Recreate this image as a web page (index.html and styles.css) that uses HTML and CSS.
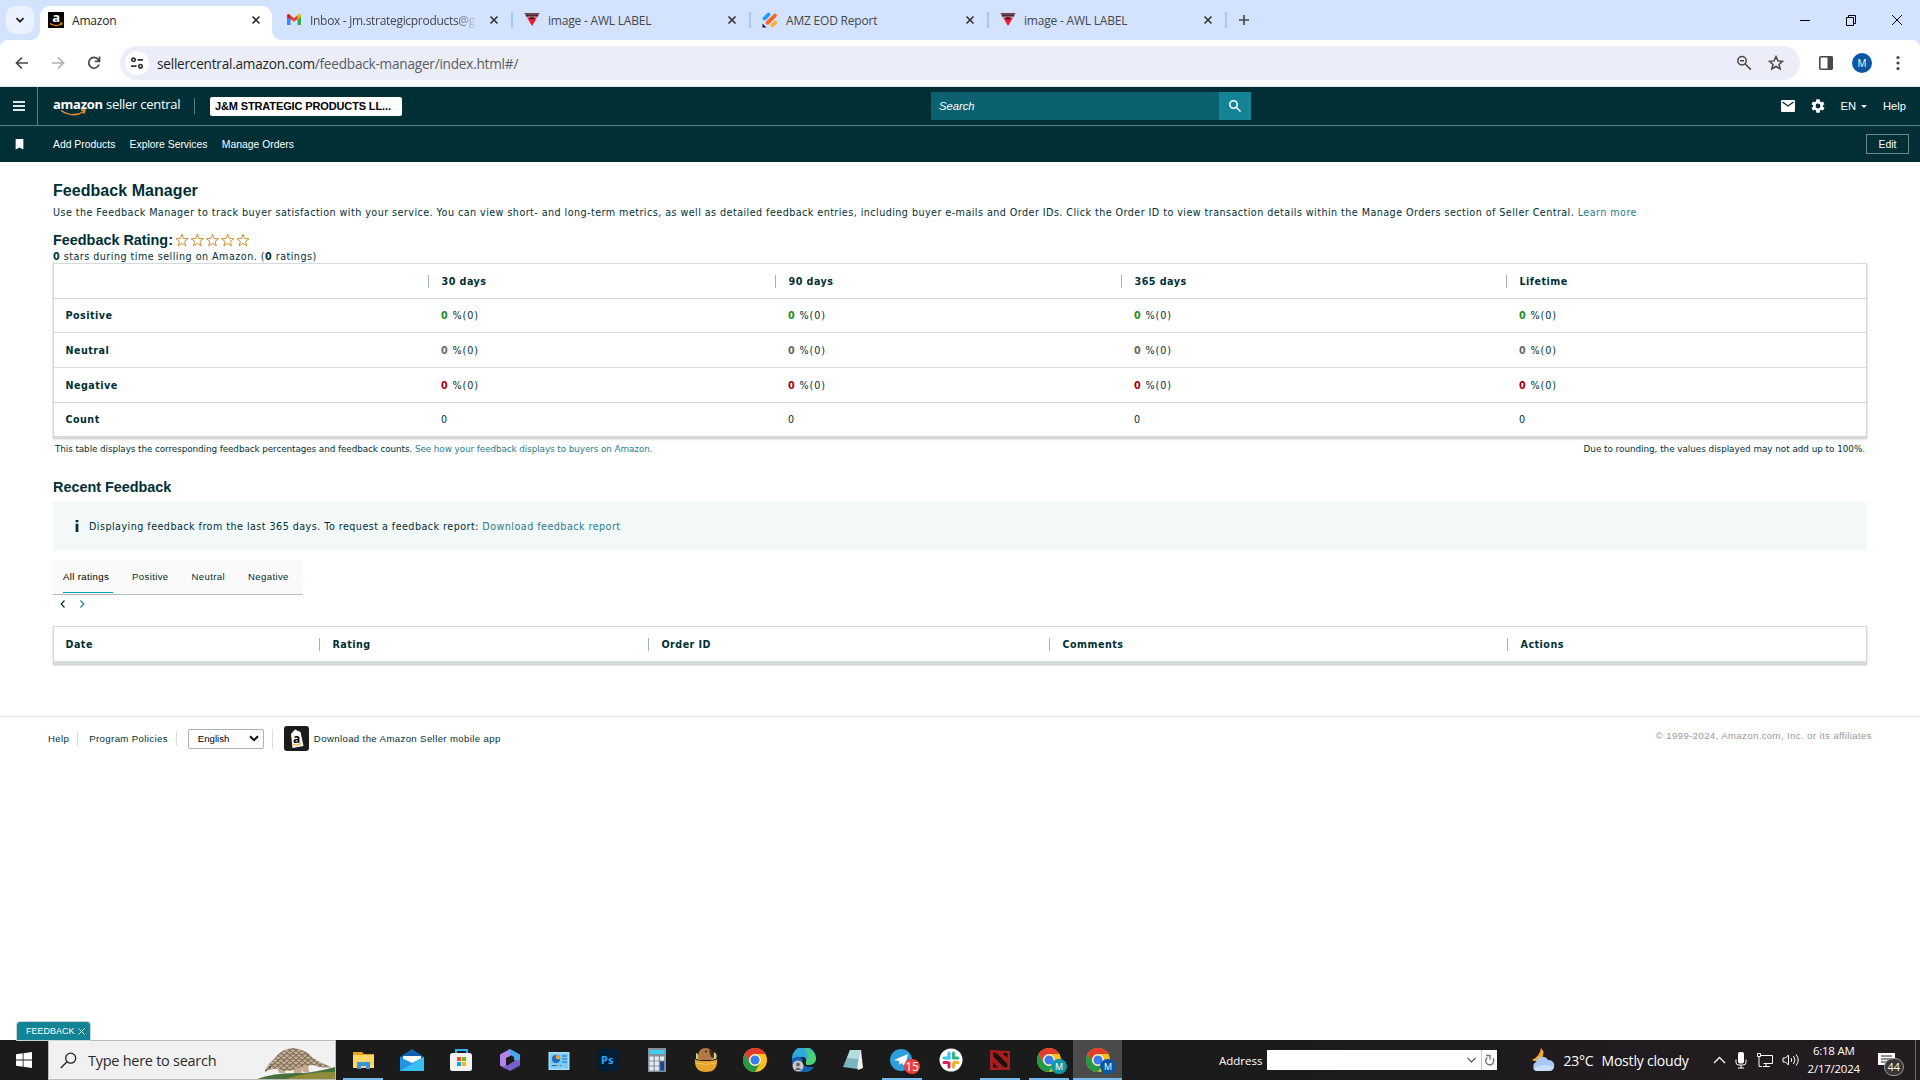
FILE: index.html
```html
<!DOCTYPE html>
<html lang="en">
<head>
    <meta charset="UTF-8">
    <meta name="viewport" content="width=device-width, initial-scale=1.0">
    <title>Amazon</title>
    <link rel="stylesheet" href="styles.css">
</head>
<body>
    <svg class="defs" width="0" height="0">
        <symbol id="x" viewBox="0 0 10 10"><path d="M1.500 1.500l7 7m0-7l-7 7"/></symbol>
        <symbol id="awl" viewBox="0 0 16 16"><path d="M.5 1h15l-2 4h-11z" fill="#2a1a3a"/><path d="M1 2h14M3 4.300h10" stroke="#d98a6a" stroke-width=".8"/><path d="M3 5.500h10L8 14z" fill="#f5142b"/><path d="M5.800 6.200h4.400" stroke="#14143c" stroke-width="1.800"/></symbol>
        <symbol id="chrome" viewBox="0 0 24 24"><circle cx="12" cy="12" r="12" fill="#fbc11a"/><path d="M1.600 6A12 12 0 0 1 22.400 6H12a6 6 0 0 0-5.200 9z" fill="#e33b2e"/><path d="M1.600 6A12 12 0 0 0 12 24l5.200-9A6 6 0 0 1 6.800 15z" fill="#229a48"/><circle cx="12" cy="12" r="5.800" fill="#fff"/><circle cx="12" cy="12" r="4.600" fill="#3b7ded"/></symbol>
    </svg>

    <div class="tabstrip">
        <div class="tab-search"><svg width="12" height="12" viewBox="0 0 12 12"><path d="M2.500 4.200 6 7.700l3.500-3.500" fill="none" stroke="#1f1f1f" stroke-width="1.800"/></svg></div>
        <div class="tab active">
            <span class="fav amazon">a<svg viewBox="0 0 16 6"><path d="M2 1.500q6 3.800 11 .6M12 1.200l2-.2-.5 2" fill="none" stroke="#f90" stroke-width="1.100"/></svg></span>
            <span class="tab-title">Amazon</span>
            <svg class="close"><use href="#x"/></svg>
        </div>
        <div class="tab">
            <svg class="fav" viewBox="0 0 16 16"><path d="M1 13V4l3.500 2.600V13z" fill="#4285f4"/><path d="M15 13V4l-3.500 2.600V13z" fill="#34a853"/><path d="M1 4.500V3.300q1-1.600 2.600-.6L8 6l4.400-3.300q1.600-1 2.600.6v1.200L8 9.800z" fill="#ea4335"/><path d="M11.500 3.400l1-.7q1.600-1 2.500.6v1.500l-3.500 2.500z" fill="#fbbc04"/><path d="M1 3.300q.6-1.400 2.300-.8l1.200.9v3.800L1 4.700z" fill="#c5221f"/></svg>
            <span class="tab-title fade">Inbox - jm.strategicproducts@g</span>
            <svg class="close"><use href="#x"/></svg>
        </div>
        <div class="tab">
            <svg class="fav"><use href="#awl"/></svg>
            <span class="tab-title">image - AWL LABEL</span>
            <svg class="close"><use href="#x"/></svg>
        </div>
        <div class="tab">
            <svg class="fav" viewBox="0 0 16 16"><g stroke-width="3.800" stroke-linecap="round"><path d="M2.500 6.500l4-4" stroke="#1e9bff"/><path d="M5.500 10.800L13 3.500" stroke="#ff6120"/><path d="M10.300 13.500l3-3" stroke="#ffb32c"/></g><path d="M.5 11.500l4 4h-4z" fill="#0a1551"/></svg>
            <span class="tab-title">AMZ EOD Report</span>
            <svg class="close"><use href="#x"/></svg>
        </div>
        <div class="tab">
            <svg class="fav"><use href="#awl"/></svg>
            <span class="tab-title">image - AWL LABEL</span>
            <svg class="close"><use href="#x"/></svg>
        </div>
        <svg class="new-tab" viewBox="0 0 12 12"><path d="M6 1v10M1 6h10" stroke="#45474a" stroke-width="1.600"/></svg>
        <div class="win-buttons">
            <svg viewBox="0 0 12 12"><path d="M1 6.500h10"/></svg>
            <svg viewBox="0 0 12 12"><path d="M1.500 3.500h7v8h-7zM3.500 3.500v-2h7v8h-2"/></svg>
            <svg viewBox="0 0 12 12"><path d="M1 1l10 10M11 1L1 11"/></svg>
        </div>
    </div>

    <div class="toolbar">
        <svg class="nav-icon" viewBox="0 0 16 16"><path d="M14 8H3M8 2.500L2.500 8 8 13.500"/></svg>
        <svg class="nav-icon off" viewBox="0 0 16 16"><path d="M2 8h11M8 2.500L13.500 8 8 13.500"/></svg>
        <svg class="nav-icon" viewBox="0 0 16 16"><path d="M13 9.500A5.300 5.300 0 1 1 12 4.300l1 1.400M13.500 1.500v4.800H8.800"/></svg>
        <div class="omnibox">
            <div class="site-info"><svg width="14" height="14" viewBox="0 0 14 14" fill="none" stroke="#333" stroke-width="1.700"><circle cx="3.500" cy="3.800" r="1.700"/><path d="M7.500 3.800H13M1 10.200h5.500"/><circle cx="10.500" cy="10.200" r="1.700"/></svg></div>
            <span class="url"><span class="host">sellercentral.amazon.com</span>/feedback-manager/index.html#/</span>
            <svg class="omni-icon" viewBox="0 0 16 16"><circle cx="6" cy="5.800" r="4.200"/><path d="M9.200 9l5.600 5.600M4 5.800h4"/></svg>
            <svg class="omni-icon" viewBox="0 0 16 16"><path d="M8 1.600l1.900 4.300 4.700.4-3.600 3.100 1.100 4.600L8 11.500 3.900 14 5 9.400 1.400 6.300l4.700-.4z"/></svg>
        </div>
        <svg class="panel" viewBox="0 0 16 16"><rect x="1.800" y="1.800" width="12.400" height="12.400" rx="1" fill="none" stroke="#474747" stroke-width="1.600"/><path d="M9.500 1.500h5v13h-5z" fill="#474747"/></svg>
        <span class="avatar">M</span>
        <svg class="dots" viewBox="0 0 4 16" fill="#474747"><circle cx="2" cy="2.500" r="1.600"/><circle cx="2" cy="8" r="1.600"/><circle cx="2" cy="13.500" r="1.600"/></svg>
    </div>

    <header>
        <div class="topbar">
            <div class="menu"><i></i><i></i><i></i></div>
            <div class="logo">
                <span><b>amazon</b> seller central</span>
                <svg viewBox="0 0 27 8"><path d="M1 1.500q12 8 23 1M21 1.300l4-.2-1 3.600" fill="none" stroke="#f3902c" stroke-width="1.400"/></svg>
            </div>
            <div class="store"><span>J&amp;M STRATEGIC PRODUCTS LL...</span></div>
            <div class="search">
                <div class="search-field">Search</div>
                <div class="search-btn"><svg width="14" height="14" viewBox="0 0 14 14" fill="none" stroke="#fff" stroke-width="1.600"><circle cx="5.500" cy="5.500" r="3.700"/><path d="M8.200 8.200l4.300 4.300"/></svg></div>
            </div>
            <div class="top-links">
                <svg width="14" height="12" viewBox="0 0 14 12"><rect width="14" height="12" rx="1.300" fill="#fff"/><path d="M1.500 2L7 6l5.500-4" fill="none" stroke="#002e36" stroke-width="1.300"/></svg>
                <svg class="gear" viewBox="0 0 24 24"><path fill="#fff" d="M19.400 13a7.500 7.500 0 0 0 0-2l2.400-1.800-2.300-4-2.800 1.200a7.500 7.500 0 0 0-1.700-1L14.500 2h-5L9 5.400a7.500 7.500 0 0 0-1.700 1L4.500 5.200l-2.300 4L4.600 11a7.500 7.500 0 0 0 0 2l-2.400 1.800 2.300 4 2.800-1.200a7.500 7.500 0 0 0 1.700 1l.5 3.400h5l.5-3.400a7.500 7.500 0 0 0 1.700-1l2.800 1.200 2.300-4zM12 15.600a3.600 3.600 0 1 1 0-7.200 3.600 3.600 0 0 1 0 7.200z"/></svg>
                <span class="lang">EN</span><i class="caret"></i>
                <span class="help">Help</span>
            </div>
        </div>
        <div class="bookmarks">
            <svg class="bookmark" viewBox="0 0 8 10"><path d="M.5 0h7v9.500L4 7.800.5 9.500z" fill="#fff"/></svg>
            <nav><a>Add Products</a><a>Explore Services</a><a>Manage Orders</a></nav>
            <button class="edit">Edit</button>
        </div>
    </header>

    <main>
        <h1>Feedback Manager</h1>
        <p class="intro">Use the Feedback Manager to track buyer satisfaction with your service. You can view short- and long-term metrics, as well as detailed feedback entries, including buyer e-mails and Order IDs. Click the Order ID to view transaction details within the Manage Orders section of Seller Central. <a>Learn more</a></p>
        <div class="rating">
            <h2>Feedback Rating:</h2>
            <svg class="stars" viewBox="0 0 76 15" fill="none" stroke="#cf8f35" stroke-width="1"><path id="s" d="M7 1.200l1.600 4.300 4.500.2-3.500 2.800 1.200 4.400L7 10.400l-3.800 2.500 1.200-4.400L.9 5.700l4.500-.2z"/><use href="#s" x="15.300"/><use href="#s" x="30.500"/><use href="#s" x="45.700"/><use href="#s" x="61"/></svg>
        </div>
        <p class="stars-note"><b>0</b> stars during time selling on Amazon. (<b>0</b> ratings)</p>

        <table class="metrics">
            <tr><th class="c0"></th><th class="c1 sep">30 days</th><th class="c2 sep">90 days</th><th class="c3 sep">365 days</th><th class="sep">Lifetime</th></tr>
            <tr class="positive"><th>Positive</th><td><b>0</b> %(0)</td><td><b>0</b> %(0)</td><td><b>0</b> %(0)</td><td><b>0</b> %(0)</td></tr>
            <tr class="neutral"><th>Neutral</th><td><b>0</b> %(0)</td><td><b>0</b> %(0)</td><td><b>0</b> %(0)</td><td><b>0</b> %(0)</td></tr>
            <tr class="negative"><th>Negative</th><td><b>0</b> %(0)</td><td><b>0</b> %(0)</td><td><b>0</b> %(0)</td><td><b>0</b> %(0)</td></tr>
            <tr class="total"><th>Count</th><td>0</td><td>0</td><td>0</td><td>0</td></tr>
        </table>
        <div class="notes">
            <span>This table displays the corresponding feedback percentages and feedback counts. <a>See how your feedback displays to buyers on Amazon.</a></span>
            <span class="rounding">Due to rounding, the values displayed may not add up to 100%.</span>
        </div>

        <h2 class="recent">Recent Feedback</h2>
        <div class="info">
            <svg viewBox="0 0 4 13"><path d="M.5 0h3v2.500h-3zM.5 4h3v9h-3z" fill="#002f36"/></svg>
            <span>Displaying feedback from the last 365 days. To request a feedback report: <a>Download feedback report</a></span>
        </div>
        <div class="filters"><span class="on">All ratings</span><span>Positive</span><span>Neutral</span><span>Negative</span></div>
        <div class="pager">
            <svg viewBox="0 0 6 8"><path d="M4.500.5L1.200 4l3.300 3.500" stroke="#002f36"/></svg>
            <svg viewBox="0 0 6 8"><path d="M1.500.5L4.800 4 1.500 7.500" stroke="#2b7d8e"/></svg>
        </div>
        <table class="entries">
            <tr><th class="e0">Date</th><th class="e1 sep">Rating</th><th class="e2 sep">Order ID</th><th class="e3 sep">Comments</th><th class="sep">Actions</th></tr>
        </table>
    </main>

    <footer>
        <span class="f-help">Help</span>
        <span class="f-policy">Program Policies</span>
        <div class="f-lang"><div class="select"><span>English</span><svg width="10" height="7" viewBox="0 0 10 7"><path d="M1 1.200l4 4 4-4" fill="none" stroke="#111" stroke-width="2"/></svg></div></div>
        <svg class="app-icon" viewBox="0 0 25 25"><rect width="25" height="25" rx="3" fill="#1b1b1b"/><path d="M7 8L11 3.500l5.500 2.500 3 14-11 2z" fill="#fff"/><text x="9" y="16.500" class="app-a">a</text><path d="M9 18.500q4 2 8-1" fill="none" stroke="#f90" stroke-width="1"/></svg>
        <span class="f-app">Download the Amazon Seller mobile app</span>
        <span class="copyright">© 1999-2024, Amazon.com, Inc. or its affiliates</span>
    </footer>

    <div class="feedback-tab"><span>FEEDBACK</span><svg width="7" height="7" viewBox="0 0 7 7"><path d="M.5.5l6 6m0-6l-6 6" stroke="#fff" stroke-width=".9"/></svg></div>

    <div class="taskbar">
        <div class="start"><svg width="16" height="16" viewBox="0 0 16 16" fill="#fff"><path d="M0 2.200l6.700-.9v6.300H0zM7.500 1.200L16 0v7.600H7.500zM0 8.400h6.700v6.300L0 13.800zM7.500 8.400H16V16l-8.500-1.200z"/></svg></div>
        <div class="task-search">
            <svg width="17" height="17" viewBox="0 0 17 17" fill="none" stroke="#222" stroke-width="1.300"><circle cx="10.700" cy="6.200" r="5"/><path d="M7 9.800L.8 16"/></svg>
            <span>Type here to search</span>
            <svg class="pangolin" width="78" height="32" viewBox="0 0 78 32">
                <defs><pattern id="scales" width="6" height="5" patternUnits="userSpaceOnUse"><rect width="6" height="5" fill="#a58f77"/><path d="M0 0q3 6 6 0M-3 3q3 5 6 0M3 3q3 5 6 0" stroke="#62503e" fill="#c2ad95" stroke-width=".7"/></pattern></defs>
                <path d="M0 32Q18 25 46 26Q60 25 78 20V32z" fill="#47703b"/><path d="M28 32q24-8 50-7v7z" fill="#8f8c3c"/>
                <path d="M20 20l2 6h6v-6zM36 19l1 7h8v-8zM44 18l2 7h6l-1-8z" fill="#c9ad93"/>
                <path d="M8 23Q11 17 17 12Q25 1 37 1Q50 3 56 11Q65 17 74 20Q65 22 56 18Q48 19 44 20Q30 27 21 22Q14 21 8 25z" fill="url(#scales)"/>
                <circle cx="13" cy="20" r=".8" fill="#222"/>
            </svg>
        </div>
        <div class="apps">
            <div class="app run"><svg viewBox="0 0 24 24"><path d="M2 4h9l2 2h10v4H2z" fill="#e0a416"/><path d="M2 7h21v13H2z" fill="#ffd667"/><path d="M6 21v-7h13v7h-4v-3h-5v3z" fill="#3a94dd"/></svg></div>
            <div class="app"><svg viewBox="0 0 24 24"><path d="M0 9l12-8 12 8v6H0z" fill="#1261b5"/><path d="M3 8h18v8H3z" fill="#fff"/><path d="M0 9l12 6 12-6v14H0z" fill="#2295e6"/><path d="M0 23L24 9v14z" fill="#38c0f3"/></svg></div>
            <div class="app"><svg viewBox="0 0 24 24"><path d="M7 6V2h11v4" fill="none" stroke="#2bb4ee" stroke-width="2"/><rect x="1" y="5" width="22" height="18" rx="2.500" fill="#f3f3f3"/><path d="M8 9h4v4H8z" fill="#f25022"/><path d="M13 9h4v4h-4z" fill="#7fba00"/><path d="M8 14h4v4H8z" fill="#00a4ef"/><path d="M13 14h4v4h-4z" fill="#ffb900"/></svg></div>
            <div class="app"><svg viewBox="0 0 24 24"><path d="M12 1L2 6.500v11l6 3.500V10l6-3z" fill="#b785ea"/><path d="M12 1l10 5.500v9L16 12V9l-4-2.500z" fill="#48a8ef"/><path d="M22 12.500v5L12 23l-8-4.500 6-1.500 8-5z" fill="#7a5fd0"/></svg></div>
            <div class="app"><svg viewBox="0 0 24 24"><rect x="1.500" y="4" width="21" height="18" fill="#a9dff9"/><rect x="3" y="5.500" width="18" height="15" fill="#7ccbf5"/><circle cx="9" cy="11" r="4" fill="#1c6fc0"/><path d="M9 7v4h4a4 4 0 0 0-4-4z" fill="#f2a52c"/><path d="M15 8h5m-5 3h5m-5 3h5M5 17.500h9" stroke="#1c6fc0" stroke-width="1.200"/><path d="M10 17.500h3" stroke="#f2a52c" stroke-width="1.400"/></svg></div>
            <div class="app"><svg viewBox="0 0 24 24"><rect x="1" y="1" width="22" height="22" rx="4" fill="#001e36"/><text x="5" y="16" class="ps">Ps</text></svg></div>
            <div class="app"><svg viewBox="0 0 24 24"><path d="M3 0h18v24H3z" fill="#84919c"/><path d="M4.500 2h15v4h-15z" fill="#3fcdf0"/><path d="M4.500 8.500h4v4h-4zm5.300 0h4v4h-4zm5.300 0h4v4h-4zm-10.600 5h4v4h-4zm5.300 0h4v4h-4zm-5.300 5h4v4h-4zm5.300 0h4v4h-4z" fill="#e7ecf0"/><path d="M15.100 13.500h4v9h-4z" fill="#174a96"/></svg></div>
            <div class="app"><svg viewBox="0 0 24 24"><path d="M2 5q3 0 2 6H2zM20 4q4 2 2 7h-3z" fill="#c5d68a"/><path d="M4 12Q3 0 12 0q7 0 8 12z" fill="#b07a44"/><path d="M15 2l4 1 1 7-3-1z" fill="#451f1a"/><circle cx="12" cy="3.500" r="1" fill="#222"/><path d="M1 11q2 2 11 2t11-2q1 13-11 13Q0 24 1 11z" fill="#e5a42c"/><path d="M2 15q10 3 20 0" stroke="#f5c55a" fill="none"/></svg></div>
            <div class="app"><svg><use href="#chrome"/></svg></div>
            <div class="app"><svg viewBox="0 0 24 24"><path d="M0 11A12 12 0 0 1 24 10q0 7-8 7-3 0-2-3 1-5-4-5-6 0-10 2z" fill="#2fa8e0"/><path d="M12 0a12 12 0 0 1 12 10q0 7-8 7-3 0-2-3Q18 6 12 0z" fill="#4bd078"/><path d="M0 11q6-5 11 0-4 9 11 8A12 12 0 0 1 0 11z" fill="#1462b0"/><circle cx="6" cy="18" r="5.500" fill="#c9c9c9"/><circle cx="6" cy="16.500" r="2" fill="#666"/><path d="M2.500 22q3.500-5 7 0z" fill="#666"/></svg></div>
            <div class="app"><svg viewBox="0 0 24 24"><path d="M9 2h11l2 18-5 2z" fill="#f0f1ec"/><path d="M9 2h10l-3 19-14-2z" fill="#7bb5bd"/><path d="M9 2h10l-1.500 9L6 10z" fill="#b5dde0"/></svg></div>
            <div class="app run"><svg viewBox="0 0 24 24"><circle cx="11" cy="12" r="11" fill="#2c9fdc"/><path d="M4 12l14-6-3 12-4-3-2 2v-4z" fill="#fff"/></svg><span class="count">15</span></div>
            <div class="app"><svg viewBox="0 0 24 24"><circle cx="12" cy="12" r="11.500" fill="#fff"/><g stroke-width="3" stroke-linecap="round"><path d="M10 5v5" stroke="#36c5f0"/><path d="M5 10h5" stroke="#36c5f0"/><path d="M14.500 5v5M19 10h-4" stroke="#2eb67d"/><path d="M10 15v4M5 14.500h4" stroke="#e01e5a"/><path d="M14.500 15v4M15 14.500h4" stroke="#ecb22e"/></g></svg></div>
            <div class="app run"><svg viewBox="0 0 24 24"><path d="M2 2l20 1v19L2 22z" fill="#a51d1d"/><path d="M5 4.500l3.500.5L19.500 16l-.5 3.500-4-1L5 8zM16 5h3.500v4.500L15 6.500zM5 14.500l5 5H5z" fill="#1c1010"/></svg></div>
            <div class="app run"><svg><use href="#chrome"/></svg><span class="profile teal">M</span></div>
            <div class="app run current"><svg><use href="#chrome"/></svg><span class="profile">M</span></div>
        </div>
        <div class="address">
            <span>Address</span>
            <div class="address-box">
                <svg width="9" height="6" viewBox="0 0 9 6"><path d="M.5.8l4 4 4-4" fill="none" stroke="#555" stroke-width="1.200"/></svg>
                <div class="go"><svg width="10" height="12" viewBox="0 0 10 12"><path d="M2.500 3.500A4 4 0 1 0 8 4.500M1 1.500h4v4" fill="none" stroke="#777" stroke-width="1.400"/></svg></div>
            </div>
        </div>
        <svg class="weather" viewBox="0 0 24 24"><path d="M10 0q5 5 0 11-4 4-9 1 8-4 9-12z" fill="#f5a623"/><path d="M5 23a5 5 0 0 1 0-9 6.500 6.500 0 0 1 12-2 5.600 5.600 0 0 1 2 11z" fill="#a9c8f5"/><path d="M2 21q10-7 21-2-1 4-5 4H5z" fill="#c9ddfa"/></svg>
        <span class="temp">23°C</span>
        <span class="sky">Mostly cloudy</span>
        <div class="tray">
            <svg width="13" height="8" viewBox="0 0 13 8"><path d="M1 7l5.500-5.500L12 7" fill="none" stroke="#fff" stroke-width="1.300"/></svg>
            <svg width="12" height="17" viewBox="0 0 12 17"><rect x="3" y="0" width="6" height="11.500" rx="2" fill="#fff"/><path d="M1 7.500v3q0 2.500 3 2.500h4q3 0 3-2.500v-3M6 13v3M3 16h6" fill="none" stroke="#fff"/></svg>
            <svg width="17" height="15" viewBox="0 0 17 15" fill="none" stroke="#fff"><path d="M4.500 2.500h12v8h-9M10 10.500v3M7 13.500h7M1.500.5v3h3v-3zM3 3.500v10h3"/></svg>
            <svg width="17" height="14" viewBox="0 0 17 14" fill="none" stroke="#fff"><path d="M1 5h2.500l3-3v10l-3-3H1zM9 5q1.500 2 0 4M11.500 3q3 4 0 8M14 1.500q4.500 5.500 0 11"/></svg>
        </div>
        <div class="clock"><span class="time">6:18 AM</span><span>2/17/2024</span></div>
        <div class="notif"><svg width="17" height="15" viewBox="0 0 17 15"><path d="M0 0h17v12h-5v3l-4-3H0z" fill="#fff"/><path d="M3 3h11M3 6h11M3 9h7" stroke="#222"/></svg><span>44</span></div>
        <i class="show-desktop"></i>
    </div>
</body>
</html>
```
FILE: styles.css
```css
* {
    box-sizing: border-box;
}
body {
    margin: 0;
    width: 1920px;
    height: 1080px;
    overflow: hidden;
    display: flex;
    flex-direction: column;
    background-color: #fff;
    color: #002f36;
    font-family: "DejaVu Sans", Verdana, sans-serif;
    position: relative;
}
svg {
    flex: none;
    display: block;
}
.defs {
    position: absolute;
}
h1, h2, p {
    margin: 0;
}
a {
    color: #2b7d8e;
}

/* browser tabs */
.tabstrip {
    height: 40px;
    background-color: #d3e3fd;
    display: flex;
    align-items: center;
    padding-left: 6px;
    font-family: "Open Sans", sans-serif;
    font-size: 12px;
    letter-spacing: -0.2px;
    color: #45474a;
}
.tab-search {
    width: 28px;
    height: 28px;
    border-radius: 9px;
    background-color: #ebf1fe;
    display: flex;
    align-items: center;
    justify-content: center;
    margin-right: 6px;
}
.tab {
    width: 238px;
    height: 16px;
    display: flex;
    align-items: center;
    padding: 0 12px 0 11px;
    border-right: 2px solid #a8c7fa;
}
.tab.active {
    width: 232px;
    height: 34px;
    align-self: flex-end;
    background-color: #fff;
    border-right: 0;
    border-radius: 10px 10px 0 0;
    padding: 0 11px 6px 8px;
    margin-right: 3px;
    color: #1f1f1f;
    position: relative;
}
/* curved feet of the selected tab */
.tab.active::before, .tab.active::after {
    content: "";
    position: absolute;
    bottom: 0;
    width: 9px;
    height: 9px;
}
.tab.active::before {
    left: -9px;
    background: radial-gradient(circle at 0 0, transparent 8.5px, #fff 9px);
}
.tab.active::after {
    right: -9px;
    background: radial-gradient(circle at 100% 0, transparent 8.5px, #fff 9px);
}
.fav {
    width: 16px;
    height: 16px;
    margin-right: 8px;
}
.fav.amazon {
    background-color: #000;
    color: #fff;
    font: bold 13px/11px "Open Sans", sans-serif;
    text-align: center;
    position: relative;
}
.fav.amazon svg {
    width: 16px;
    height: 6px;
    position: absolute;
    left: 0;
    bottom: 0;
}
.tab-title {
    flex: 1;
    white-space: nowrap;
}
.fade {
    letter-spacing: -0.3px;
    margin-right: 12px;
    -webkit-mask-image: linear-gradient(to right, #000 88%, transparent);
    mask-image: linear-gradient(to right, #000 88%, transparent);
}
.close {
    width: 10px;
    height: 10px;
    stroke: #333;
    stroke-width: 1.6;
}
.new-tab {
    width: 12px;
    height: 12px;
    margin-left: 11px;
}
.win-buttons {
    display: flex;
    gap: 34px;
    margin-left: auto;
    padding-right: 17px;
}
.win-buttons svg {
    width: 12px;
    height: 12px;
    fill: none;
    stroke: #000;
}

/* browser toolbar */
.toolbar {
    height: 47px;
    background: linear-gradient(#d3e3fd, #d3e3fd) 0 0 / 100% 10px no-repeat;
    border-bottom: 1px solid #dfe1e5;
    display: flex;
    align-items: center;
    position: relative;
    padding-left: 14px;
    z-index: 0;
}
.toolbar::before {
    content: "";
    position: absolute;
    inset: 0;
    background-color: #fff;
    border-radius: 8px 8px 0 0;
    z-index: -1;
}
.nav-icon {
    width: 16px;
    height: 16px;
    margin-right: 20px;
    fill: none;
    stroke: #474747;
    stroke-width: 1.7;
}
.nav-icon.off {
    stroke: #b0b0b0;
}
.omnibox {
    width: 1680px;
    height: 34px;
    margin-left: -2px;
    border-radius: 17px;
    background-color: #ebeef8;
    display: flex;
    align-items: center;
    padding: 0 16px 0 5px;
}
.site-info {
    width: 24px;
    height: 24px;
    border-radius: 12px;
    background-color: #fff;
    display: flex;
    align-items: center;
    justify-content: center;
    margin-right: 8px;
}
.url {
    flex: 1;
    font: 13.6px "Open Sans", sans-serif;
    letter-spacing: -0.22px;
    color: #5a5c60;
}
.host {
    color: #1f1f1f;
}
.omni-icon {
    width: 16px;
    height: 16px;
    margin-left: 16px;
    fill: none;
    stroke: #474747;
    stroke-width: 1.5;
}
.panel {
    width: 16px;
    height: 16px;
    margin: 0 18px 0 18px;
}
.avatar {
    width: 20px;
    height: 20px;
    border-radius: 10px;
    background-color: #0b57a4;
    color: #fff;
    font: 10px/20px "Open Sans", sans-serif;
    text-align: center;
}
.dots {
    width: 4px;
    height: 16px;
    margin-left: 24px;
}

/* seller central header */
header {
    background-color: #002f36;
    color: #fff;
    font-family: "Liberation Sans", Arial, sans-serif;
    height: 75px;
}
.topbar {
    height: 39px;
    border-bottom: 1px solid #5d7b80;
    display: flex;
    align-items: center;
}
.menu {
    width: 38px;
    height: 38px;
    border-right: 1px solid #5d7b80;
    display: flex;
    flex-direction: column;
    align-items: center;
    justify-content: center;
    gap: 2px;
}
.menu i {
    width: 12px;
    height: 2px;
    background-color: #e0e6e6;
}
.logo {
    width: 142px;
    height: 16px;
    margin-left: 15px;
    border-right: 1px solid #5d7b80;
    font: 13px/12px "Open Sans", sans-serif;
    letter-spacing: -0.26px;
    white-space: nowrap;
    position: relative;
}
.logo svg {
    width: 27px;
    height: 8px;
    position: absolute;
    left: 7px;
    top: 11px;
}
.store {
    width: 192px;
    height: 19px;
    margin-left: 15px;
    padding-left: 5px;
    background-color: #fff;
    border-radius: 2px;
    color: #000;
    font: bold 11px/19px "Liberation Sans", Arial, sans-serif;
    letter-spacing: -0.13px;
    white-space: nowrap;
}
.search {
    width: 320px;
    height: 28px;
    margin-left: 529px;
    display: flex;
}
.search-field {
    flex: 1;
    background-color: #0c6170;
    padding-left: 8px;
    font-size: 11.2px;
    font-style: italic;
    line-height: 28px;
}
.search-btn {
    width: 32px;
    background-color: #128495;
    display: flex;
    align-items: center;
    justify-content: center;
}
.top-links {
    flex: 1;
    display: flex;
    align-items: center;
    justify-content: flex-end;
    padding-right: 14px;
    font-size: 11.2px;
}
.gear {
    width: 16px;
    height: 16px;
    margin: 0 14px 0 15px;
}
.caret {
    border: 3px solid transparent;
    border-top-color: #fff;
    border-bottom: 0;
    margin: 0 16px 0 5px;
}
.bookmarks {
    height: 36px;
    display: flex;
    align-items: center;
    padding: 0 11px 0 15px;
    font-size: 10.4px;
}
.bookmark {
    width: 9px;
    height: 11px;
}
.bookmarks nav {
    display: flex;
    gap: 14.2px;
    margin-left: 29px;
}
.bookmarks a {
    color: #fff;
}
.edit {
    width: 43px;
    height: 20px;
    margin-left: auto;
    padding: 0;
    background: none;
    border: 1px solid #6d878b;
    color: #fff;
    font: 10.4px "Liberation Sans", Arial, sans-serif;
}

/* page */
main {
    padding: 19px 53px 0;
    letter-spacing: 0.46px;
}
h1 {
    font: bold 16px/20px "Liberation Sans", Arial, sans-serif;
    letter-spacing: 0.05px;
}
h2 {
    font: bold 14.4px/18px "Liberation Sans", Arial, sans-serif;
    letter-spacing: 0;
}
.intro {
    margin-top: 4px;
    font-size: 9.6px;
    letter-spacing: 0.449px;
    line-height: 16px;
    white-space: nowrap;
}
.rating {
    display: flex;
    align-items: center;
    margin-top: 10px;
}
.stars {
    width: 76px;
    height: 15px;
    margin-left: 2px;
}
.stars-note {
    font-size: 9.6px;
    letter-spacing: 0.48px;
    line-height: 14px;
    padding-top: 1px;
    margin-bottom: -1px;
}
table {
    width: 100%;
    table-layout: fixed;
    border-collapse: separate;
    border-spacing: 0;
    border: 1px solid #d5dbdb;
    box-shadow: 0 1px 2px rgba(0, 0, 0, 0.25);
    font-size: 9.6px;
}
th, td {
    text-align: left;
    height: 35px;
    padding: 0 0 0 13px;
    border-bottom: 1px solid #d5dbdb;
}
td {
    letter-spacing: 0.9px;
}
th:first-child {
    padding-left: 11.5px;
}
.sep {
    padding-left: 13.5px;
    background: linear-gradient(#a2b3b5, #a2b3b5) 0 50% / 1px 13px no-repeat;
}
.positive > *, .total > * {
    height: 34px;
}
.c0 { width: 374px; }
.c1 { width: 347px; }
.c2 { width: 346px; }
.c3 { width: 385px; }
.positive b { color: #1a8f1a; }
.neutral b { color: #666; }
.negative b { color: #a3000f; }
.notes {
    display: flex;
    justify-content: space-between;
    padding: 0 2px;
    font-size: 8.8px;
    letter-spacing: -0.07px;
    line-height: 22px;
}
.rounding {
    letter-spacing: -0.02px;
}
.recent {
    margin-top: 18px;
}
.info {
    height: 48px;
    margin-top: 6px;
    background-color: #f3f8f9;
    display: flex;
    align-items: center;
    padding-left: 22px;
    font-size: 9.6px;
}
.info svg {
    width: 4px;
    height: 12px;
    margin-right: 10px;
}
.filters {
    width: 250px;
    height: 35px;
    margin-top: 10px;
    padding: 0 10px;
    background-color: #fafafa;
    border-bottom: 1px solid #bbb;
    display: flex;
    gap: 23px;
    font: 9.6px/34px "Liberation Sans", Arial, sans-serif;
    letter-spacing: 0.36px;
}
.filters .on {
    height: 33px;
    padding-right: 4px;
    margin-right: -4px;
    border-bottom: 1px solid #00a4b4;
    color: #000;
}
.pager {
    display: flex;
    gap: 13px;
    padding: 5px 7px;
}
.pager svg {
    width: 6px;
    height: 8px;
    fill: none;
    stroke-width: 1.2;
}
.entries {
    margin-top: 13px;
}
.entries th {
    height: 36px;
    border-bottom-width: 2px;
}
.e0 { width: 265px; }
.e1 { width: 329px; }
.e2 { width: 401px; }
.e3 { width: 458px; }

footer {
    height: 44px;
    margin-top: 52px;
    border-top: 1px solid #e3e5e5;
    padding: 0 48px;
    display: flex;
    align-items: center;
    font: 9.6px "Liberation Sans", Arial, sans-serif;
    letter-spacing: 0.38px;
}
.f-help, .f-policy {
    border-right: 1px solid #ddd;
    line-height: 15px;
    padding-right: 8px;
    margin-right: 11px;
}
.f-lang {
    padding-right: 8px;
    border-right: 1px solid #ddd;
}
.select {
    width: 76px;
    height: 20px;
    border: 1px solid #aeb4b5;
    border-radius: 2px;
    display: flex;
    align-items: center;
    justify-content: space-between;
    padding: 0 4px 0 9px;
    letter-spacing: 0;
    color: #000;
}
.app-icon {
    width: 25px;
    height: 25px;
    margin: 0 5px 0 11px;
}
.app-a {
    font: bold 12px "Open Sans", sans-serif;
}
.copyright {
    margin-left: auto;
    padding-bottom: 6px;
    color: #999;
}

/* feedback tab sits over the page bottom */
.feedback-tab {
    position: absolute;
    left: 16px;
    top: 1021px;
    width: 75px;
    height: 20px;
    border: 1px solid #cdd5d6;
    border-radius: 4px 4px 0 0;
    background-color: #128495;
    color: #fff;
    display: flex;
    align-items: center;
    padding-left: 9px;
    gap: 3px;
    font: 9px "Liberation Sans", Arial, sans-serif;
}

/* windows taskbar */
.taskbar {
    height: 40px;
    margin-top: auto;
    background: linear-gradient(to right, #1b1b1b 60%, #231c21);
    color: #fff;
    display: flex;
    align-items: center;
    font-family: "Open Sans", sans-serif;
}
.start {
    width: 48px;
    padding-left: 16px;
}
.task-search {
    width: 288px;
    height: 40px;
    background-color: #f1f1f1;
    border: 1px solid #bbb;
    display: flex;
    align-items: center;
    padding-left: 11px;
    color: #2b2b2b;
    font-size: 14.5px;
    letter-spacing: -0.27px;
}
.task-search span {
    margin-left: 11px;
    white-space: nowrap;
}
.pangolin {
    margin-left: auto;
    align-self: flex-end;
}
.apps {
    display: flex;
    margin-left: 2px;
}
.app {
    width: 49px;
    height: 40px;
    display: flex;
    align-items: center;
    justify-content: center;
    position: relative;
    background: no-repeat center bottom / 40px 2px;
}
.app svg {
    width: 24px;
    height: 24px;
}
.app.run {
    background-image: linear-gradient(#76b9ed, #76b9ed);
}
.app.current {
    background-color: #4b4b4b;
    background-size: 100% 2px;
}
.ps {
    font: bold 11px "Open Sans", sans-serif;
    fill: #31a8ff;
}
.count, .profile {
    position: absolute;
    left: 27px;
    top: 19px;
    width: 16px;
    height: 15px;
    border-radius: 8px;
    background-color: #0b57a4;
    font-size: 9px;
    line-height: 15px;
    text-align: center;
}
.count {
    background-color: #f03e37;
    font-size: 12px;
}
.teal {
    background-color: #0c9aa8;
}
.address {
    display: flex;
    align-items: center;
    margin-left: 97px;
    gap: 5px;
    font-size: 11.5px;
}
.address-box {
    width: 230px;
    height: 20px;
    background-color: #fff;
    display: flex;
    align-items: center;
    justify-content: flex-end;
    gap: 5px;
}
.go {
    height: 20px;
    width: 16px;
    border-left: 1px solid #ccc;
    display: flex;
    align-items: center;
    justify-content: center;
}
.weather {
    width: 24px;
    height: 24px;
    margin-left: 34px;
}
.temp, .sky {
    font-size: 14px;
    letter-spacing: -0.2px;
    margin-left: 8px;
    white-space: nowrap;
}
.tray {
    display: flex;
    align-items: center;
    gap: 9px;
    margin-left: 24px;
}
.clock {
    display: flex;
    flex-direction: column;
    align-items: center;
    font-size: 11.5px;
    letter-spacing: -0.25px;
    line-height: 18px;
    margin-left: 9px;
}
.notif {
    margin-left: 18px;
    position: relative;
}
.notif span {
    position: absolute;
    left: 6px;
    top: 5px;
    width: 20px;
    height: 18px;
    border: 1px solid #999;
    border-radius: 9px;
    background-color: #3a3638;
    font-size: 11px;
    line-height: 16px;
    text-align: center;
}
.show-desktop {
    width: 5px;
    height: 40px;
    margin-left: auto;
    border-left: 1px solid #6b6669;
}
```
